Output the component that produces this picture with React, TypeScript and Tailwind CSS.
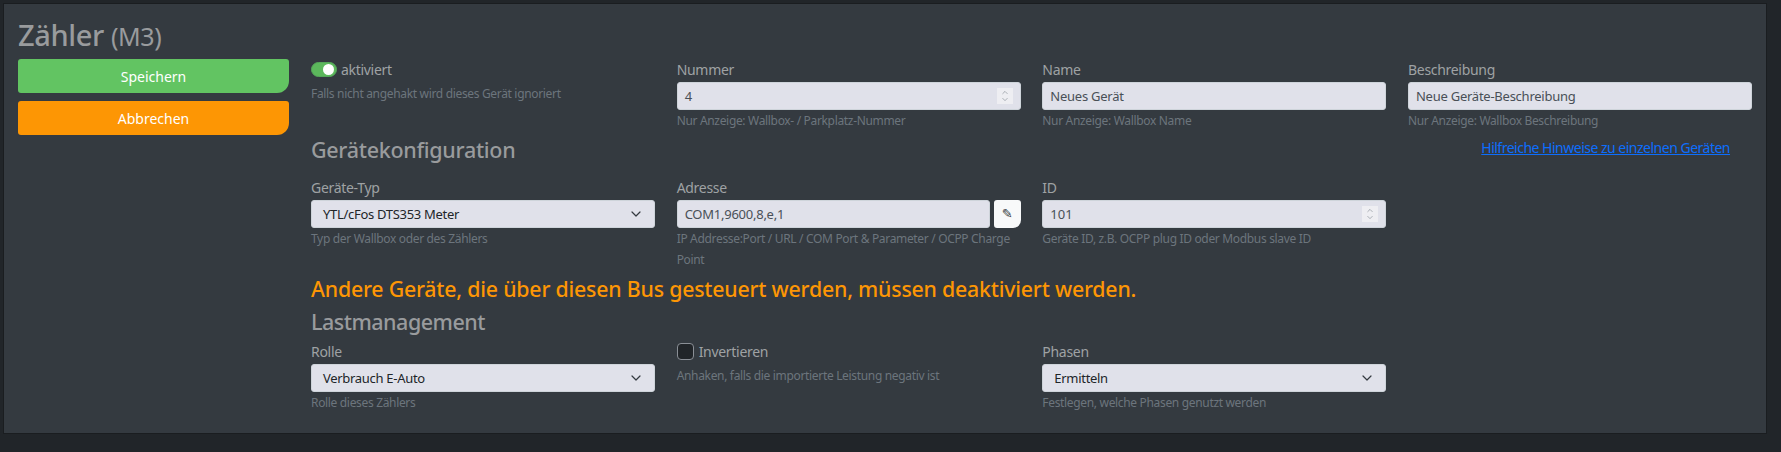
import { ChevronDown, ChevronUp } from 'lucide-react';

function Label({ children }: { children: React.ReactNode }) {
  return <label className="mb-[1px] block h-[22px] text-[14px] leading-[21px] tracking-[-0.3px] text-[#9fa2a4]">{children}</label>;
}

function Hint({ children }: { children: React.ReactNode }) {
  return <p className="text-[12px] leading-[21px] tracking-[-0.33px] text-[#6c757d]">{children}</p>;
}

function TextInput({ value }: { value: string }) {
  return (
    <div className="flex h-[28px] items-center rounded-[3px] border border-[#ced4da] bg-[#e0e1ea] px-[7px] pt-[1px] text-[13px] tracking-[-0.25px] text-[#495057]">
      {value}
    </div>
  );
}

function NumberInput({ value }: { value: string }) {
  return (
    <div className="flex h-[28px] items-center justify-between rounded-[3px] border border-[#ced4da] bg-[#e0e1ea] pl-[7px] pr-[7px] text-[13px] text-[#495057]">
      <span className="pt-[1px]">{value}</span>
      <span className="flex h-[16px] w-[16px] flex-col items-center justify-center bg-[#eeeef2] text-[#6c757d]">
        <ChevronUp size={10} strokeWidth={1.4} className="-mb-[1px]" />
        <ChevronDown size={10} strokeWidth={1.4} className="-mt-[1px]" />
      </span>
    </div>
  );
}

function Select({ value }: { value: string }) {
  return (
    <div className="flex h-[28px] items-center justify-between rounded-[3px] border border-[#ced4da] bg-[#e0e1ea] pl-[11px] pr-[10px] text-[13px] tracking-[-0.3px] text-[#212529]">
      <span className="pt-[1px]">{value}</span>
      <ChevronDown size={16} strokeWidth={1.8} className="text-[#343a40]" />
    </div>
  );
}

export default function App() {
  return (
    <div className="h-[452px] w-full overflow-hidden bg-[#212529] pl-[3px] pr-[14px] pt-[3px] font-['Noto_Sans',sans-serif]">
      <div className="flex h-[431px] gap-[22px] border border-[#1a1d20] bg-[#343a40] px-[14px]">
        {/* left column */}
        <div className="w-[271px] shrink-0">
          <h1 className="mt-[13px] h-[42px] text-[29px] font-medium leading-[36px] tracking-[-0.4px] text-[#999b9d]">
            Zähler <span className="text-[25px] font-normal">(M3)</span>
          </h1>
          <button className="block h-[34px] w-full rounded-[3px] rounded-br-[12px] bg-[#62c462] pt-[1px] text-[14px] text-white">
            Speichern
          </button>
          <button className="mt-[8px] block h-[34px] w-full rounded-[3px] rounded-br-[12px] bg-[#fd9604] text-[14px] text-white">
            Abbrechen
          </button>
        </div>

        {/* form */}
        <div className="flex-1 pt-[55px]">
          <div className="grid grid-cols-4 gap-x-[21.67px]">
            <div>
              <div className="flex h-[21px] items-center gap-[4px]">
                <span className="flex h-[15px] w-[26px] items-center justify-end rounded-full border border-[#55a85a] bg-[#5cb85c] pr-[2px]">
                  <span className="h-[11px] w-[11px] rounded-full bg-white" />
                </span>
                <span className="-mt-[1px] text-[14px] tracking-[-0.3px] text-[#9fa2a4]">aktiviert</span>
              </div>
              <div className="pt-[3px]">
                <Hint>Falls nicht angehakt wird dieses Gerät ignoriert</Hint>
              </div>
            </div>
            <div>
              <Label>Nummer</Label>
              <NumberInput value="4" />
              <Hint>Nur Anzeige: Wallbox- / Parkplatz-Nummer</Hint>
            </div>
            <div>
              <Label>Name</Label>
              <TextInput value="Neues Gerät" />
              <Hint>Nur Anzeige: Wallbox Name</Hint>
            </div>
            <div>
              <Label>Beschreibung</Label>
              <TextInput value="Neue Geräte-Beschreibung" />
              <Hint>Nur Anzeige: Wallbox Beschreibung</Hint>
            </div>
          </div>

          <div className="flex h-[46px] items-start justify-between pr-[22px]">
            <h2 className="mt-[4px] text-[21.5px] font-medium leading-[30px] tracking-[-0.3px] text-[#999b9d]">Gerätekonfiguration</h2>
            <a className="mt-[6px] text-[14px] leading-[21px] tracking-[-0.5px] text-[#0d6efd] underline">
              Hilfreiche Hinweise zu einzelnen Geräten
            </a>
          </div>

          <div className="grid grid-cols-4 gap-x-[21.67px]">
            <div>
              <Label>Geräte-Typ</Label>
              <Select value="YTL/cFos DTS353 Meter" />
              <Hint>Typ der Wallbox oder des Zählers</Hint>
            </div>
            <div>
              <Label>Adresse</Label>
              <div className="flex gap-[4px]">
                <div className="flex-1">
                  <TextInput value="COM1,9600,8,e,1" />
                </div>
                <span className="flex h-[28px] w-[27px] items-center justify-center rounded-[3px] rounded-br-[8px] bg-[#f8f9fa] font-['DejaVu_Sans',sans-serif] text-[13px] font-bold text-[#343a40]">
                  ✎
                </span>
              </div>
              <Hint>IP Addresse:Port / URL / COM Port &amp; Parameter / OCPP Charge Point</Hint>
            </div>
            <div>
              <Label>ID</Label>
              <NumberInput value="101" />
              <Hint>Geräte ID, z.B. OCPP plug ID oder Modbus slave ID</Hint>
            </div>
          </div>

          <p className="mt-[4px] text-[21.3px] font-medium leading-[30px] tracking-[-0.2px] text-[#fd9604]">
            Andere Geräte, die über diesen Bus gesteuert werden, müssen deaktiviert werden.
          </p>
          <h2 className="mt-[3px] text-[21.5px] font-medium leading-[30px] tracking-[-0.5px] text-[#999b9d]">Lastmanagement</h2>

          <div className="mt-[4px] grid grid-cols-4 gap-x-[21.67px]">
            <div>
              <Label>Rolle</Label>
              <Select value="Verbrauch E-Auto" />
              <Hint>Rolle dieses Zählers</Hint>
            </div>
            <div>
              <div className="flex h-[21px] items-center gap-[5px]">
                <span className="h-[17px] w-[17px] rounded-[4px] border border-[#8a8f96] bg-[#212529]" />
                <span className="-mt-[1px] text-[14px] tracking-[-0.3px] text-[#9fa2a4]">Invertieren</span>
              </div>
              <div className="pt-[3px]">
                <Hint>Anhaken, falls die importierte Leistung negativ ist</Hint>
              </div>
            </div>
            <div>
              <Label>Phasen</Label>
              <Select value="Ermitteln" />
              <Hint>Festlegen, welche Phasen genutzt werden</Hint>
            </div>
          </div>
        </div>
      </div>
    </div>
  );
}
